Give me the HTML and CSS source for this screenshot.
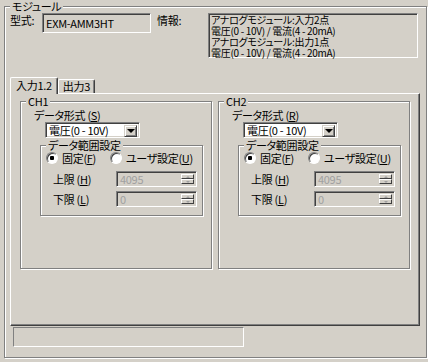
FILE: index.html
```html
<!DOCTYPE html>
<html lang="ja">
<head>
    <meta charset="UTF-8">
    <meta name="viewport" content="width=device-width, initial-scale=1.0">
    <title>モジュール</title>
    <link rel="stylesheet" href="styles.css">
</head>
<body>

    <fieldset class="group module">
        <legend>モジュール</legend>

        <div class="info-row">
            <span class="type-lbl">型式:</span>
            <div class="field model">EXM-AMM3HT</div>
            <span class="info-lbl">情報:</span>
            <div class="field info">
                <span class="info-line">アナログモジュール:入力2点</span>
                <span class="info-line">電圧(0 - 10V) / 電流(4 - 20mA)</span>
                <span class="info-line">アナログモジュール:出力1点</span>
                <span class="info-line">電圧(0 - 10V) / 電流(4 - 20mA)</span>
            </div>
        </div>

        <div class="tabs">
            <div class="tab active">入力1.2</div>
            <div class="tab">出力3</div>
        </div>

        <div class="tab-panel">
            <fieldset class="group ch">
                <legend>CH1</legend>
                <div class="ch-label">データ形式 (<u>S</u>)</div>
                <div class="combo">
                    <span class="combo-text">電圧(0 - 10V)</span>
                    <span class="combo-btn"><span class="arrow"></span></span>
                </div>
                <fieldset class="group range">
                    <legend>データ範囲設定</legend>
                    <div class="radio-row">
                        <label class="radio-item first"><span class="radio checked"></span><span>固定(<u>F</u>)</span></label>
                        <label class="radio-item"><span class="radio"></span><span>ユーザ設定(<u>U</u>)</span></label>
                    </div>
                    <div class="limit-row">
                        <span class="limit-lbl">上限 (<u>H</u>)</span>
                        <div class="spin">
                            <span class="spin-text">4095</span>
                            <span class="spin-btns"><span class="sb up"></span><span class="sb down"></span></span>
                        </div>
                    </div>
                    <div class="limit-row">
                        <span class="limit-lbl">下限 (<u>L</u>)</span>
                        <div class="spin">
                            <span class="spin-text">0</span>
                            <span class="spin-btns"><span class="sb up"></span><span class="sb down"></span></span>
                        </div>
                    </div>
                </fieldset>
            </fieldset>

            <fieldset class="group ch">
                <legend>CH2</legend>
                <div class="ch-label">データ形式 (<u>R</u>)</div>
                <div class="combo">
                    <span class="combo-text">電圧(0 - 10V)</span>
                    <span class="combo-btn"><span class="arrow"></span></span>
                </div>
                <fieldset class="group range">
                    <legend>データ範囲設定</legend>
                    <div class="radio-row">
                        <label class="radio-item first"><span class="radio checked"></span><span>固定(<u>F</u>)</span></label>
                        <label class="radio-item"><span class="radio"></span><span>ユーザ設定(<u>U</u>)</span></label>
                    </div>
                    <div class="limit-row">
                        <span class="limit-lbl">上限 (<u>H</u>)</span>
                        <div class="spin">
                            <span class="spin-text">4095</span>
                            <span class="spin-btns"><span class="sb up"></span><span class="sb down"></span></span>
                        </div>
                    </div>
                    <div class="limit-row">
                        <span class="limit-lbl">下限 (<u>L</u>)</span>
                        <div class="spin">
                            <span class="spin-text">0</span>
                            <span class="spin-btns"><span class="sb up"></span><span class="sb down"></span></span>
                        </div>
                    </div>
                </fieldset>
            </fieldset>
        </div>

        <div class="status"></div>
    </fieldset>

</body>
</html>
```

FILE: styles.css
```css
*{
    box-sizing: border-box;
}

html, body{
    margin: 0;
    padding: 0;
}

body{
    width: 428px;
    height: 362px;
    overflow: hidden;
    background-color: #d4d0c8;
    color: #000;
    font-family: "Noto Sans CJK JP", sans-serif;
    font-size: 11px;
    line-height: 13px;
    font-feature-settings: "palt";
    letter-spacing: -0.3px;
    white-space: nowrap;
}

u{
    text-decoration: underline;
    text-underline-offset: 1px;
}

/* etched group box */
.group{
    margin: 0;
    padding: 0;
    min-width: 0;
    border: 1px solid #808080;
    box-shadow: 1px 1px 0 #fff, inset 1px 1px 0 #fff;
}
.group legend{
    padding: 0 2px;
    margin-left: 5px;
    line-height: 13px;
    background-color: #d4d0c8;
}

.module{
    margin: 0 1px 0 4px;
    height: 358px;
    padding: 0 6px 0 5px;
}
.module legend{
    margin-left: 0;
    line-height: 12px;
}

/* sunken edit */
.field{
    border: 1px solid;
    border-color: #808080 #fff #fff #808080;
    box-shadow: inset 1px 1px 0 #404040, inset -1px -1px 0 #d4d0c8;
    background-color: #d4d0c8;
}

.info-row{
    display: flex;
    align-items: flex-start;
    height: 45px;
    margin-top: 1px;
}
.type-lbl{
    width: 32px;
    padding-top: 1px;
}
.model{
    width: 109px;
    height: 20px;
    padding: 3px 3px;
}
.info-lbl{
    width: 51px;
    margin-left: 6px;
    padding-top: 1px;
}
.info{
    width: 210px;
    height: 45px;
    padding: 0 2px;
    font-size: 10px;
    line-height: 11px;
}
.info-line{
    display: block;
    height: 11px;
}

/* tabs */
.tabs{
    display: flex;
    align-items: flex-end;
    height: 16px;
    margin-top: 19px;
    position: relative;
    z-index: 1;
}
.tab{
    height: 14px;
    padding: 0 4px;
    line-height: 12px;
    border: 1px solid;
    border-bottom: none;
    border-color: #fff #404040 #fff #fff;
    box-shadow: inset -1px 0 0 #808080;
    border-radius: 2px 2px 0 0;
    background-color: #d4d0c8;
}
.tab.active{
    height: 17px;
    margin-bottom: -1px;
    padding: 1px 5px 0 5px;
}

.tab-panel{
    display: flex;
    align-items: flex-start;
    gap: 6px;
    height: 233px;
    padding: 1px 8px 0 9px;
    border: 1px solid;
    border-color: #fff #404040 #404040 #fff;
    box-shadow: inset -1px -1px 0 #808080;
}

.ch{
    width: 192px;
    height: 174px;
}
.ch > legend{
    margin-left: 5px;
}
.ch-label{
    margin: 2px 0 0 13px;
    height: 13px;
}

.combo{
    display: flex;
    width: 95px;
    height: 16px;
    margin: 0 0 0 24px;
    border: 1px solid;
    border-color: #808080 #fff #fff #808080;
    box-shadow: inset 1px 1px 0 #404040, inset -1px -1px 0 #d4d0c8;
    background-color: #fff;
    padding: 2px;
}
.combo-text{
    flex: 1;
    line-height: 11px;
    padding-left: 1px;
}
.combo-btn{
    width: 13px;
    height: 12px;
    display: flex;
    align-items: center;
    justify-content: center;
    background-color: #d4d0c8;
    border: 1px solid;
    border-color: #d4d0c8 #404040 #404040 #d4d0c8;
    box-shadow: inset 1px 1px 0 #fff, inset -1px -1px 0 #808080;
}
.arrow{
    width: 0;
    height: 0;
    border-left: 4px solid transparent;
    border-right: 4px solid transparent;
    border-top: 4px solid #000;
}

.range{
    margin: 1px 8px 0 19px;
    height: 77px;
}
.range > legend{
    margin-left: 5px;
}

.radio-row{
    display: flex;
    align-items: center;
    height: 14px;
    padding-left: 5px;
}
.radio-item{
    display: flex;
    align-items: center;
    gap: 4px;
}
.radio-item.first{
    width: 64px;
}
.radio{
    flex: none;
    width: 12px;
    height: 12px;
    border-radius: 50%;
    background-color: #fff;
    border: 1px solid;
    border-color: #808080 #fff #fff #808080;
    box-shadow: inset 1px 1px 0 #404040;
}
.radio.checked{
    background: radial-gradient(circle, #000 0 2px, #fff 2.5px);
}

.limit-row{
    display: flex;
    align-items: center;
    height: 16px;
    margin-top: 6px;
    padding-left: 12px;
}
.limit-row + .limit-row{
    margin-top: 4px;
}
.limit-lbl{
    width: 63px;
}
.spin{
    display: flex;
    width: 81px;
    height: 16px;
    padding: 2px;
    border: 1px solid;
    border-color: #808080 #fff #fff #808080;
    box-shadow: inset 1px 1px 0 #404040, inset -1px -1px 0 #d4d0c8;
    background-color: #d4d0c8;
}
.spin-text{
    flex: 1;
    color: #a0a0a0;
    line-height: 11px;
    padding-left: 1px;
}
.spin-btns{
    width: 13px;
    display: flex;
    flex-direction: column;
}
.sb{
    flex: 1;
    display: flex;
    align-items: center;
    justify-content: center;
    border: 1px solid;
    border-color: #fff #404040 #404040 #fff;
    background-color: #d4d0c8;
}
.sb::after{
    content: "";
    width: 0;
    height: 0;
    border-left: 2px solid transparent;
    border-right: 2px solid transparent;
}
.sb.up::after{
    border-bottom: 2px solid #a0a0a0;
}
.sb.down::after{
    border-top: 2px solid #a0a0a0;
}

.status{
    width: 231px;
    height: 20px;
    margin: 1px 0 0 3px;
    border: 1px solid;
    border-color: #808080 #fff #fff #808080;
    background-color: #d4d0c8;
}
```
